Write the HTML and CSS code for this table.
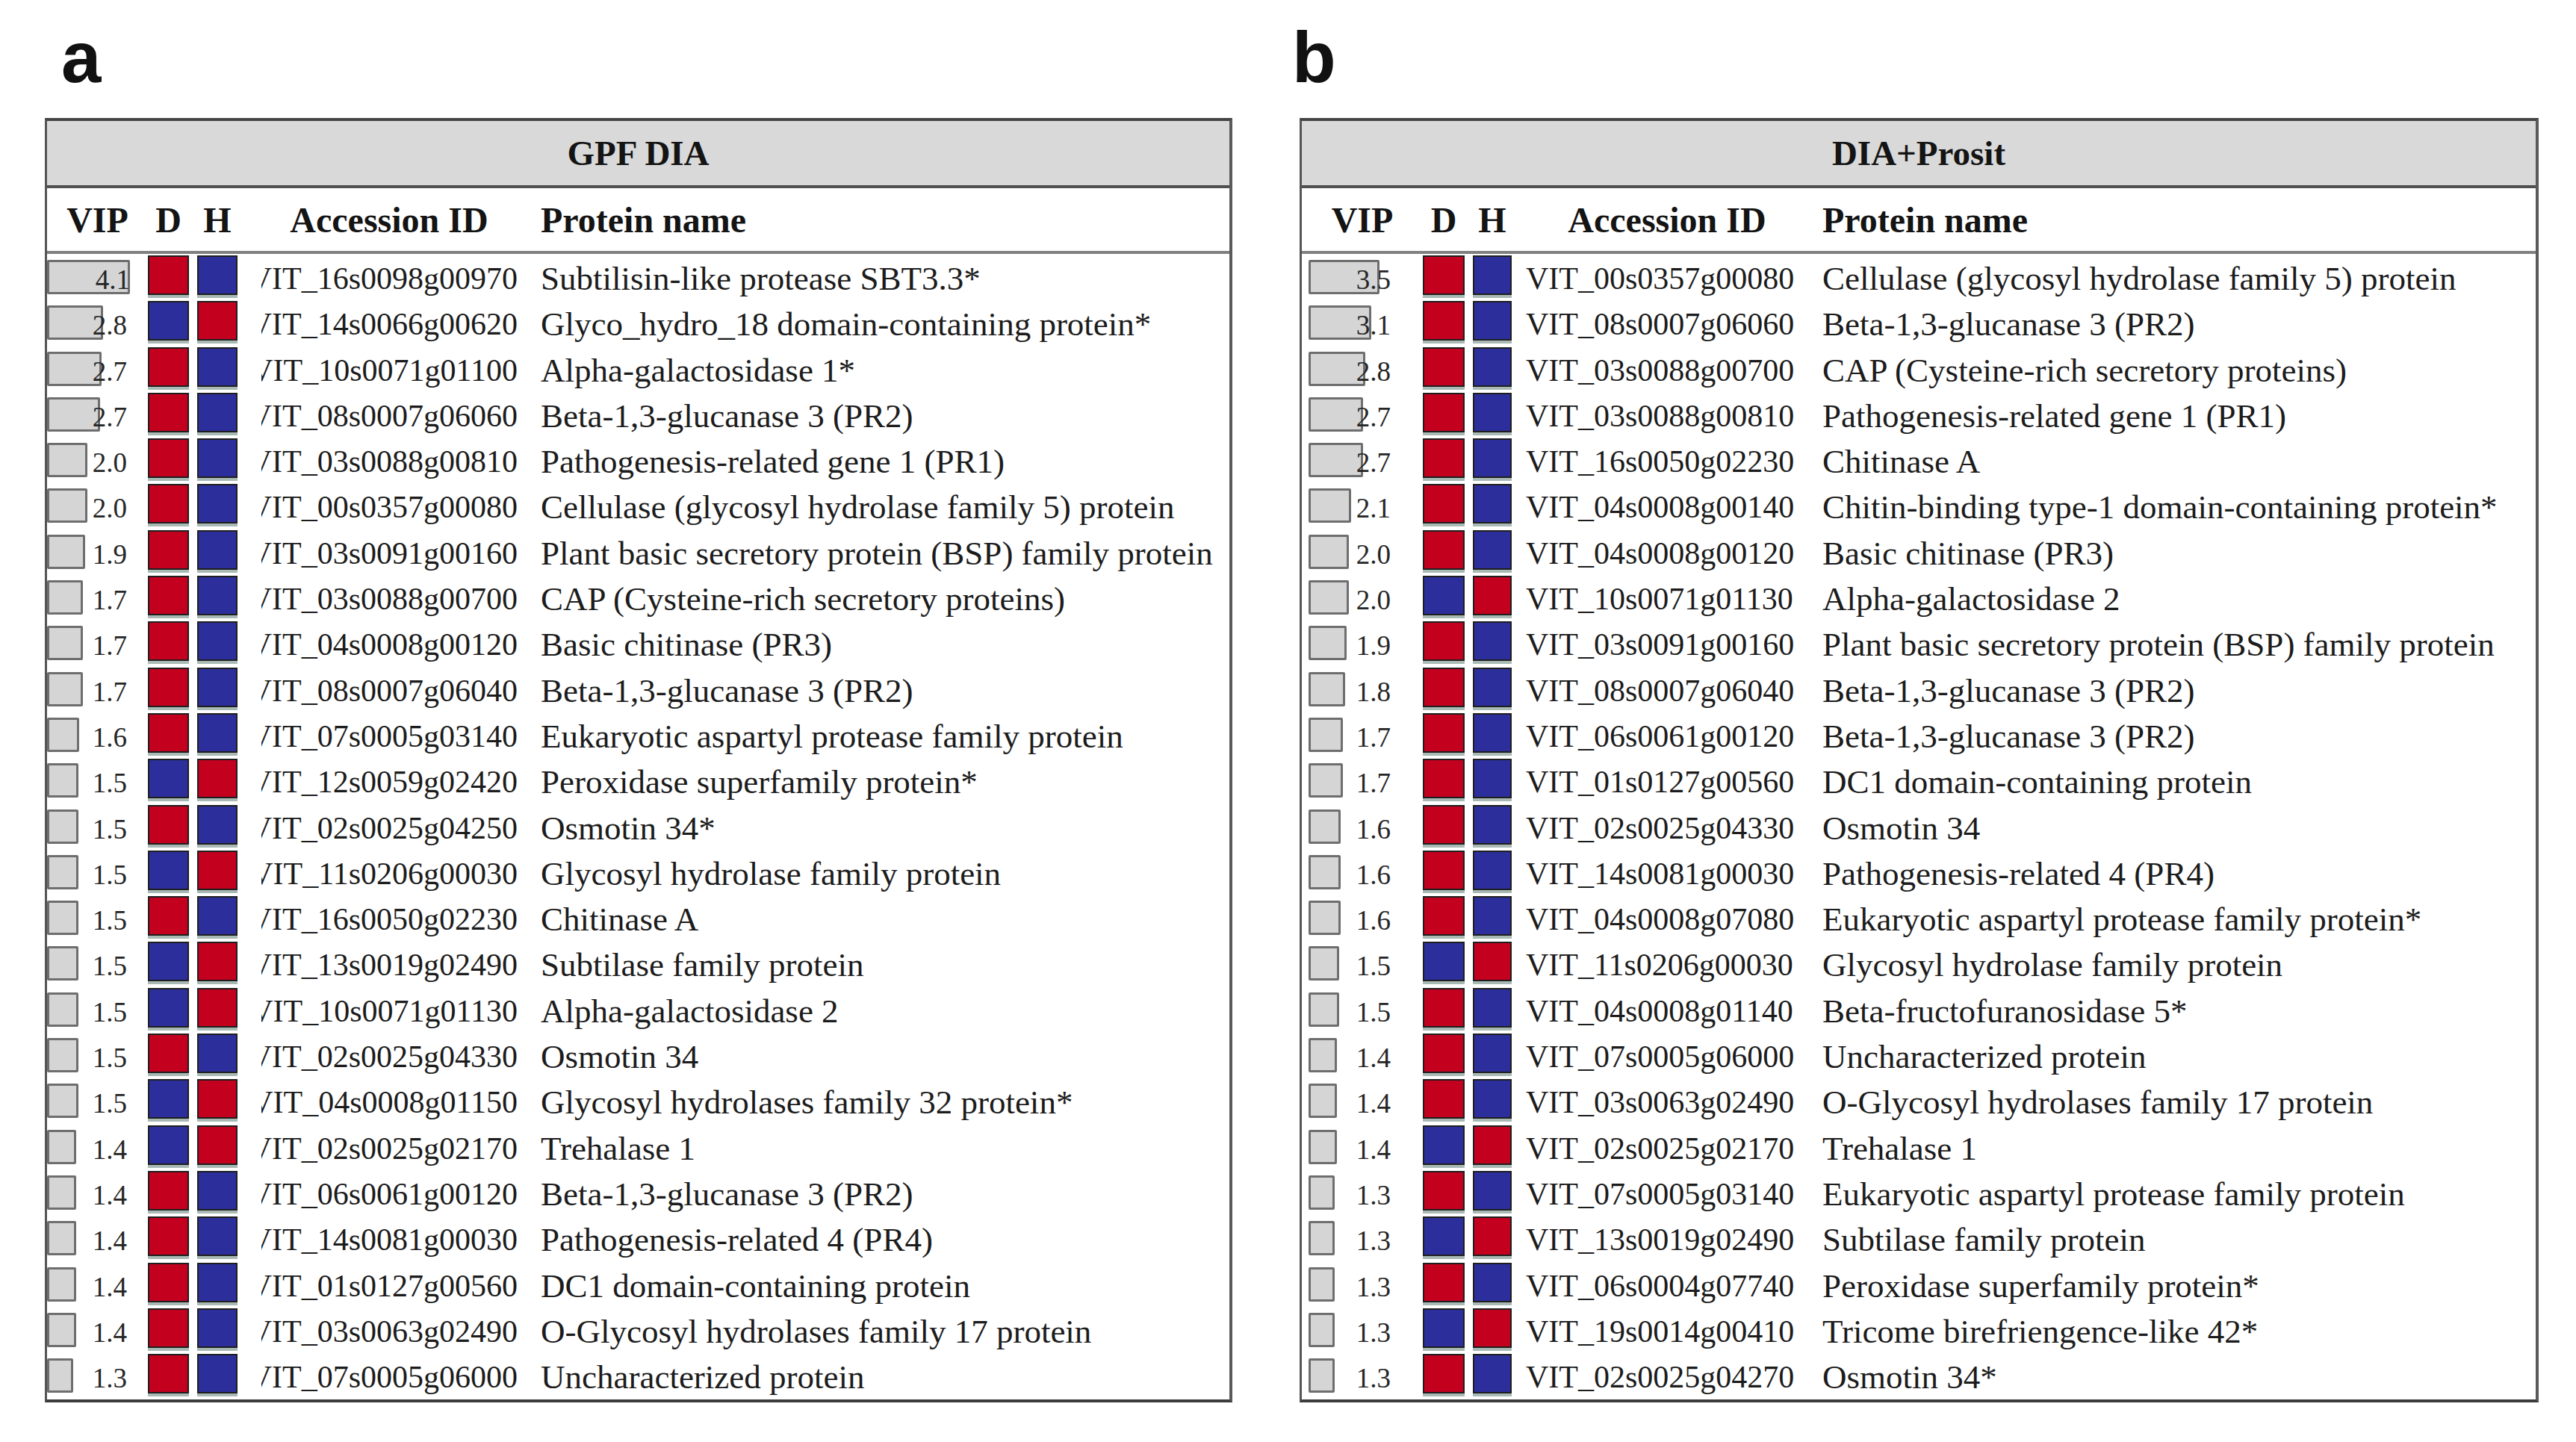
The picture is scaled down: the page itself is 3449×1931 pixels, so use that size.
FILE: index.html
```html
<!DOCTYPE html>
<html>
<head>
<meta charset="utf-8">
<link rel="stylesheet" href="styles.css">
</head>
<body>
<div class="page">
  <section class="panel pa">
    <div class="label label-a">a</div>
    <div class="table">
      <div class="band">GPF DIA</div>
      <div class="grid head">
        <div>VIP</div><div>D</div><div class="hh">H</div><div>Accession ID</div><div class="hname">Protein name</div>
      </div>
      <div class="rows">
        <div class="grid row"><div class="vip"><span class="bar" style="width:111px"></span><span class="num">4.1</span></div><div class="sw"><span class="box r"></span></div><div class="sw hh"><span class="box b"></span></div><div class="acc"><span>VIT_16s0098g00970</span></div><div class="name">Subtilisin-like protease SBT3.3*</div></div>
        <div class="grid row"><div class="vip"><span class="bar" style="width:75px"></span><span class="num">2.8</span></div><div class="sw"><span class="box b"></span></div><div class="sw hh"><span class="box r"></span></div><div class="acc"><span>VIT_14s0066g00620</span></div><div class="name">Glyco_hydro_18 domain-containing protein*</div></div>
        <div class="grid row"><div class="vip"><span class="bar" style="width:73px"></span><span class="num">2.7</span></div><div class="sw"><span class="box r"></span></div><div class="sw hh"><span class="box b"></span></div><div class="acc"><span>VIT_10s0071g01100</span></div><div class="name">Alpha-galactosidase 1*</div></div>
        <div class="grid row"><div class="vip"><span class="bar" style="width:71px"></span><span class="num">2.7</span></div><div class="sw"><span class="box r"></span></div><div class="sw hh"><span class="box b"></span></div><div class="acc"><span>VIT_08s0007g06060</span></div><div class="name">Beta-1,3-glucanase 3 (PR2)</div></div>
        <div class="grid row"><div class="vip"><span class="bar" style="width:54px"></span><span class="num">2.0</span></div><div class="sw"><span class="box r"></span></div><div class="sw hh"><span class="box b"></span></div><div class="acc"><span>VIT_03s0088g00810</span></div><div class="name">Pathogenesis-related gene 1 (PR1)</div></div>
        <div class="grid row"><div class="vip"><span class="bar" style="width:54px"></span><span class="num">2.0</span></div><div class="sw"><span class="box r"></span></div><div class="sw hh"><span class="box b"></span></div><div class="acc"><span>VIT_00s0357g00080</span></div><div class="name">Cellulase (glycosyl hydrolase family 5) protein</div></div>
        <div class="grid row"><div class="vip"><span class="bar" style="width:51px"></span><span class="num">1.9</span></div><div class="sw"><span class="box r"></span></div><div class="sw hh"><span class="box b"></span></div><div class="acc"><span>VIT_03s0091g00160</span></div><div class="name">Plant basic secretory protein (BSP) family protein</div></div>
        <div class="grid row"><div class="vip"><span class="bar" style="width:48px"></span><span class="num">1.7</span></div><div class="sw"><span class="box r"></span></div><div class="sw hh"><span class="box b"></span></div><div class="acc"><span>VIT_03s0088g00700</span></div><div class="name">CAP (Cysteine-rich secretory proteins)</div></div>
        <div class="grid row"><div class="vip"><span class="bar" style="width:48px"></span><span class="num">1.7</span></div><div class="sw"><span class="box r"></span></div><div class="sw hh"><span class="box b"></span></div><div class="acc"><span>VIT_04s0008g00120</span></div><div class="name">Basic chitinase (PR3)</div></div>
        <div class="grid row"><div class="vip"><span class="bar" style="width:48px"></span><span class="num">1.7</span></div><div class="sw"><span class="box r"></span></div><div class="sw hh"><span class="box b"></span></div><div class="acc"><span>VIT_08s0007g06040</span></div><div class="name">Beta-1,3-glucanase 3 (PR2)</div></div>
        <div class="grid row"><div class="vip"><span class="bar" style="width:43px"></span><span class="num">1.6</span></div><div class="sw"><span class="box r"></span></div><div class="sw hh"><span class="box b"></span></div><div class="acc"><span>VIT_07s0005g03140</span></div><div class="name">Eukaryotic aspartyl protease family protein</div></div>
        <div class="grid row"><div class="vip"><span class="bar" style="width:42px"></span><span class="num">1.5</span></div><div class="sw"><span class="box b"></span></div><div class="sw hh"><span class="box r"></span></div><div class="acc"><span>VIT_12s0059g02420</span></div><div class="name">Peroxidase superfamily protein*</div></div>
        <div class="grid row"><div class="vip"><span class="bar" style="width:42px"></span><span class="num">1.5</span></div><div class="sw"><span class="box r"></span></div><div class="sw hh"><span class="box b"></span></div><div class="acc"><span>VIT_02s0025g04250</span></div><div class="name">Osmotin 34*</div></div>
        <div class="grid row"><div class="vip"><span class="bar" style="width:42px"></span><span class="num">1.5</span></div><div class="sw"><span class="box b"></span></div><div class="sw hh"><span class="box r"></span></div><div class="acc"><span>VIT_11s0206g00030</span></div><div class="name">Glycosyl hydrolase family protein</div></div>
        <div class="grid row"><div class="vip"><span class="bar" style="width:42px"></span><span class="num">1.5</span></div><div class="sw"><span class="box r"></span></div><div class="sw hh"><span class="box b"></span></div><div class="acc"><span>VIT_16s0050g02230</span></div><div class="name">Chitinase A</div></div>
        <div class="grid row"><div class="vip"><span class="bar" style="width:42px"></span><span class="num">1.5</span></div><div class="sw"><span class="box b"></span></div><div class="sw hh"><span class="box r"></span></div><div class="acc"><span>VIT_13s0019g02490</span></div><div class="name">Subtilase family protein</div></div>
        <div class="grid row"><div class="vip"><span class="bar" style="width:42px"></span><span class="num">1.5</span></div><div class="sw"><span class="box b"></span></div><div class="sw hh"><span class="box r"></span></div><div class="acc"><span>VIT_10s0071g01130</span></div><div class="name">Alpha-galactosidase 2</div></div>
        <div class="grid row"><div class="vip"><span class="bar" style="width:42px"></span><span class="num">1.5</span></div><div class="sw"><span class="box r"></span></div><div class="sw hh"><span class="box b"></span></div><div class="acc"><span>VIT_02s0025g04330</span></div><div class="name">Osmotin 34</div></div>
        <div class="grid row"><div class="vip"><span class="bar" style="width:42px"></span><span class="num">1.5</span></div><div class="sw"><span class="box b"></span></div><div class="sw hh"><span class="box r"></span></div><div class="acc"><span>VIT_04s0008g01150</span></div><div class="name">Glycosyl hydrolases family 32 protein*</div></div>
        <div class="grid row"><div class="vip"><span class="bar" style="width:39px"></span><span class="num">1.4</span></div><div class="sw"><span class="box b"></span></div><div class="sw hh"><span class="box r"></span></div><div class="acc"><span>VIT_02s0025g02170</span></div><div class="name">Trehalase 1</div></div>
        <div class="grid row"><div class="vip"><span class="bar" style="width:39px"></span><span class="num">1.4</span></div><div class="sw"><span class="box r"></span></div><div class="sw hh"><span class="box b"></span></div><div class="acc"><span>VIT_06s0061g00120</span></div><div class="name">Beta-1,3-glucanase 3 (PR2)</div></div>
        <div class="grid row"><div class="vip"><span class="bar" style="width:39px"></span><span class="num">1.4</span></div><div class="sw"><span class="box r"></span></div><div class="sw hh"><span class="box b"></span></div><div class="acc"><span>VIT_14s0081g00030</span></div><div class="name">Pathogenesis-related 4 (PR4)</div></div>
        <div class="grid row"><div class="vip"><span class="bar" style="width:39px"></span><span class="num">1.4</span></div><div class="sw"><span class="box r"></span></div><div class="sw hh"><span class="box b"></span></div><div class="acc"><span>VIT_01s0127g00560</span></div><div class="name">DC1 domain-containing protein</div></div>
        <div class="grid row"><div class="vip"><span class="bar" style="width:39px"></span><span class="num">1.4</span></div><div class="sw"><span class="box r"></span></div><div class="sw hh"><span class="box b"></span></div><div class="acc"><span>VIT_03s0063g02490</span></div><div class="name">O-Glycosyl hydrolases family 17 protein</div></div>
        <div class="grid row"><div class="vip"><span class="bar" style="width:35px"></span><span class="num">1.3</span></div><div class="sw"><span class="box r"></span></div><div class="sw hh"><span class="box b"></span></div><div class="acc"><span>VIT_07s0005g06000</span></div><div class="name">Uncharacterized protein</div></div>
      </div>
    </div>
  </section>

  <section class="panel pb">
    <div class="label label-b">b</div>
    <div class="table">
      <div class="band">DIA+Prosit</div>
      <div class="grid head">
        <div>VIP</div><div>D</div><div class="hh">H</div><div>Accession ID</div><div class="hname">Protein name</div>
      </div>
      <div class="rows">
        <div class="grid row"><div class="vip"><span class="bar" style="width:95px"></span><span class="num">3.5</span></div><div class="sw"><span class="box r"></span></div><div class="sw hh"><span class="box b"></span></div><div class="acc"><span>VIT_00s0357g00080</span></div><div class="name">Cellulase (glycosyl hydrolase family 5) protein</div></div>
        <div class="grid row"><div class="vip"><span class="bar" style="width:84px"></span><span class="num">3.1</span></div><div class="sw"><span class="box r"></span></div><div class="sw hh"><span class="box b"></span></div><div class="acc"><span>VIT_08s0007g06060</span></div><div class="name">Beta-1,3-glucanase 3 (PR2)</div></div>
        <div class="grid row"><div class="vip"><span class="bar" style="width:76px"></span><span class="num">2.8</span></div><div class="sw"><span class="box r"></span></div><div class="sw hh"><span class="box b"></span></div><div class="acc"><span>VIT_03s0088g00700</span></div><div class="name">CAP (Cysteine-rich secretory proteins)</div></div>
        <div class="grid row"><div class="vip"><span class="bar" style="width:73px"></span><span class="num">2.7</span></div><div class="sw"><span class="box r"></span></div><div class="sw hh"><span class="box b"></span></div><div class="acc"><span>VIT_03s0088g00810</span></div><div class="name">Pathogenesis-related gene 1 (PR1)</div></div>
        <div class="grid row"><div class="vip"><span class="bar" style="width:73px"></span><span class="num">2.7</span></div><div class="sw"><span class="box r"></span></div><div class="sw hh"><span class="box b"></span></div><div class="acc"><span>VIT_16s0050g02230</span></div><div class="name">Chitinase A</div></div>
        <div class="grid row"><div class="vip"><span class="bar" style="width:57px"></span><span class="num">2.1</span></div><div class="sw"><span class="box r"></span></div><div class="sw hh"><span class="box b"></span></div><div class="acc"><span>VIT_04s0008g00140</span></div><div class="name">Chitin-binding type-1 domain-containing protein*</div></div>
        <div class="grid row"><div class="vip"><span class="bar" style="width:54px"></span><span class="num">2.0</span></div><div class="sw"><span class="box r"></span></div><div class="sw hh"><span class="box b"></span></div><div class="acc"><span>VIT_04s0008g00120</span></div><div class="name">Basic chitinase (PR3)</div></div>
        <div class="grid row"><div class="vip"><span class="bar" style="width:54px"></span><span class="num">2.0</span></div><div class="sw"><span class="box b"></span></div><div class="sw hh"><span class="box r"></span></div><div class="acc"><span>VIT_10s0071g01130</span></div><div class="name">Alpha-galactosidase 2</div></div>
        <div class="grid row"><div class="vip"><span class="bar" style="width:51px"></span><span class="num">1.9</span></div><div class="sw"><span class="box r"></span></div><div class="sw hh"><span class="box b"></span></div><div class="acc"><span>VIT_03s0091g00160</span></div><div class="name">Plant basic secretory protein (BSP) family protein</div></div>
        <div class="grid row"><div class="vip"><span class="bar" style="width:49px"></span><span class="num">1.8</span></div><div class="sw"><span class="box r"></span></div><div class="sw hh"><span class="box b"></span></div><div class="acc"><span>VIT_08s0007g06040</span></div><div class="name">Beta-1,3-glucanase 3 (PR2)</div></div>
        <div class="grid row"><div class="vip"><span class="bar" style="width:46px"></span><span class="num">1.7</span></div><div class="sw"><span class="box r"></span></div><div class="sw hh"><span class="box b"></span></div><div class="acc"><span>VIT_06s0061g00120</span></div><div class="name">Beta-1,3-glucanase 3 (PR2)</div></div>
        <div class="grid row"><div class="vip"><span class="bar" style="width:46px"></span><span class="num">1.7</span></div><div class="sw"><span class="box r"></span></div><div class="sw hh"><span class="box b"></span></div><div class="acc"><span>VIT_01s0127g00560</span></div><div class="name">DC1 domain-containing protein</div></div>
        <div class="grid row"><div class="vip"><span class="bar" style="width:43px"></span><span class="num">1.6</span></div><div class="sw"><span class="box r"></span></div><div class="sw hh"><span class="box b"></span></div><div class="acc"><span>VIT_02s0025g04330</span></div><div class="name">Osmotin 34</div></div>
        <div class="grid row"><div class="vip"><span class="bar" style="width:43px"></span><span class="num">1.6</span></div><div class="sw"><span class="box r"></span></div><div class="sw hh"><span class="box b"></span></div><div class="acc"><span>VIT_14s0081g00030</span></div><div class="name">Pathogenesis-related 4 (PR4)</div></div>
        <div class="grid row"><div class="vip"><span class="bar" style="width:43px"></span><span class="num">1.6</span></div><div class="sw"><span class="box r"></span></div><div class="sw hh"><span class="box b"></span></div><div class="acc"><span>VIT_04s0008g07080</span></div><div class="name">Eukaryotic aspartyl protease family protein*</div></div>
        <div class="grid row"><div class="vip"><span class="bar" style="width:41px"></span><span class="num">1.5</span></div><div class="sw"><span class="box b"></span></div><div class="sw hh"><span class="box r"></span></div><div class="acc"><span>VIT_11s0206g00030</span></div><div class="name">Glycosyl hydrolase family protein</div></div>
        <div class="grid row"><div class="vip"><span class="bar" style="width:41px"></span><span class="num">1.5</span></div><div class="sw"><span class="box r"></span></div><div class="sw hh"><span class="box b"></span></div><div class="acc"><span>VIT_04s0008g01140</span></div><div class="name">Beta-fructofuranosidase 5*</div></div>
        <div class="grid row"><div class="vip"><span class="bar" style="width:38px"></span><span class="num">1.4</span></div><div class="sw"><span class="box r"></span></div><div class="sw hh"><span class="box b"></span></div><div class="acc"><span>VIT_07s0005g06000</span></div><div class="name">Uncharacterized protein</div></div>
        <div class="grid row"><div class="vip"><span class="bar" style="width:38px"></span><span class="num">1.4</span></div><div class="sw"><span class="box r"></span></div><div class="sw hh"><span class="box b"></span></div><div class="acc"><span>VIT_03s0063g02490</span></div><div class="name">O-Glycosyl hydrolases family 17 protein</div></div>
        <div class="grid row"><div class="vip"><span class="bar" style="width:38px"></span><span class="num">1.4</span></div><div class="sw"><span class="box b"></span></div><div class="sw hh"><span class="box r"></span></div><div class="acc"><span>VIT_02s0025g02170</span></div><div class="name">Trehalase 1</div></div>
        <div class="grid row"><div class="vip"><span class="bar" style="width:35px"></span><span class="num">1.3</span></div><div class="sw"><span class="box r"></span></div><div class="sw hh"><span class="box b"></span></div><div class="acc"><span>VIT_07s0005g03140</span></div><div class="name">Eukaryotic aspartyl protease family protein</div></div>
        <div class="grid row"><div class="vip"><span class="bar" style="width:35px"></span><span class="num">1.3</span></div><div class="sw"><span class="box b"></span></div><div class="sw hh"><span class="box r"></span></div><div class="acc"><span>VIT_13s0019g02490</span></div><div class="name">Subtilase family protein</div></div>
        <div class="grid row"><div class="vip"><span class="bar" style="width:35px"></span><span class="num">1.3</span></div><div class="sw"><span class="box r"></span></div><div class="sw hh"><span class="box b"></span></div><div class="acc"><span>VIT_06s0004g07740</span></div><div class="name">Peroxidase superfamily protein*</div></div>
        <div class="grid row"><div class="vip"><span class="bar" style="width:35px"></span><span class="num">1.3</span></div><div class="sw"><span class="box b"></span></div><div class="sw hh"><span class="box r"></span></div><div class="acc"><span>VIT_19s0014g00410</span></div><div class="name">Tricome birefriengence-like 42*</div></div>
        <div class="grid row"><div class="vip"><span class="bar" style="width:35px"></span><span class="num">1.3</span></div><div class="sw"><span class="box r"></span></div><div class="sw hh"><span class="box b"></span></div><div class="acc"><span>VIT_02s0025g04270</span></div><div class="name">Osmotin 34*</div></div>
      </div>
    </div>
  </section>
</div>
</body>
</html>
```

FILE: styles.css
```css
html, body {
  margin: 0;
  padding: 0;
  background: #ffffff;
}

body {
  width: 3449px;
  height: 1931px;
  overflow: hidden;
  color: #1c1c1c;
  font-family: "Liberation Serif", "Times New Roman", serif;
}

.page {
  display: flex;
  gap: 90px;
  padding: 29px 0 0 60px;
}

.panel {
  display: flex;
  flex-direction: column;
}

.pa { width: 1590px; }
.pb { width: 1659px; }

.label {
  font-family: "Liberation Sans", Arial, sans-serif;
  font-weight: bold;
  font-size: 96px;
  line-height: 96px;
  height: 96px;
  margin-bottom: 33px;
  color: #111;
}

.label-a { margin-left: 22px; }
.label-b { margin-left: -10px; }

.table {
  border-top: 4px solid #444;
  border-right: 4px solid #5a5a5a;
  border-bottom: 4px solid #3c3c3c;
  border-left: 3px solid #555;
  padding-bottom: 1.5px;
}

.band {
  height: 86px;
  background: #d9d9d9;
  border-bottom: 4px solid #505050;
  display: flex;
  align-items: center;
  justify-content: center;
  font-weight: bold;
  font-size: 47px;
  color: #141414;
}

.grid {
  display: grid;
}

.pa .grid { grid-template-columns: 135px 55px 65px 406px 1fr; }
.pb .grid { grid-template-columns: 162px 56px 63px 416px 1fr; }

.head {
  height: 84px;
  border-bottom: 4px solid #808080;
  align-items: center;
  text-align: center;
  font-weight: bold;
  font-size: 48px;
  color: #141414;
}

.head .hname { text-align: left; }
.head .hh { padding-left: 11px; }

.row {
  height: 61.3px;
}

.vip {
  display: grid;
  height: 61.3px;
}

.pa .vip { padding-right: 28px; }
.pb .vip { padding-left: 9px; padding-right: 43px; }

.bar {
  grid-area: 1 / 1;
  justify-self: start;
  align-self: start;
  margin-top: 8px;
  height: 46px;
  box-sizing: border-box;
  background: #d5d5d5;
  border: 3px solid #6e6e6e;
  border-radius: 2px;
}

.num {
  grid-area: 1 / 1;
  justify-self: end;
  align-self: start;
  margin-top: 16px;
  font-size: 37px;
  line-height: 37px;
  color: #262626;
}

.sw {
  display: flex;
  flex-direction: column;
  padding-top: 2px;
}

.sw.hh { padding-left: 11px; }

.box {
  display: block;
  height: 53px;
  box-sizing: border-box;
  border: 2px solid #1e1e1e;
  box-shadow: 0 4px 0 #a9bab5;
}

.box.r { background: #c4001f; }
.box.b { background: #2c2f9b; }

.acc {
  display: flex;
  overflow: hidden;
  white-space: nowrap;
  font-size: 42px;
  line-height: 55px;
  padding-top: 6px;
}

.pa .acc {
  margin-left: 32px;
  padding-right: 31px;
  justify-content: flex-end;
}

.pb .acc {
  padding-left: 19px;
}

.name {
  white-space: nowrap;
  overflow: hidden;
  font-size: 45px;
  line-height: 55px;
  padding-top: 6px;
}
```
